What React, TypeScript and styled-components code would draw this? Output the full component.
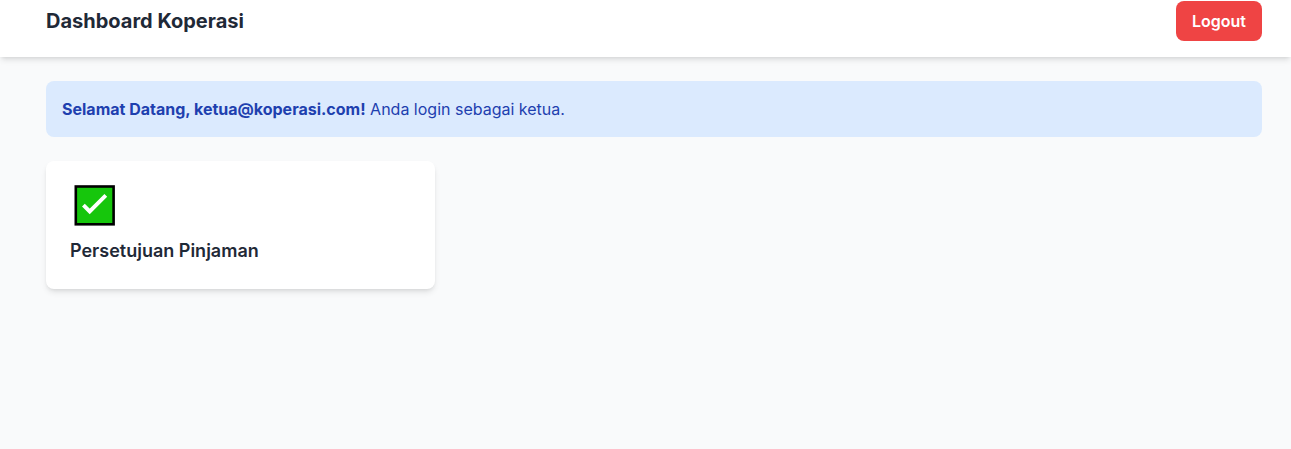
import React from "react";
import styled, { createGlobalStyle } from "styled-components";

const GlobalStyle = createGlobalStyle`
  *, *::before, *::after { box-sizing: border-box; }
  html, body { margin: 0; padding: 0; overflow: hidden; }
  body {
    background: #f9fafb;
    color: #1f2937;
    font-family: Inter, "Liberation Sans", sans-serif;
    font-size: 16px;
    line-height: 24px;
  }
`;

const Page = styled.div`
  min-height: 100vh;
  background: #f9fafb;
`;

const Header = styled.header`
  display: flex;
  align-items: center;
  justify-content: space-between;
  height: 57px;
  padding: 1px 29px 16px 46px;
  background: #ffffff;
  box-shadow: 0 4px 6px -1px rgba(0, 0, 0, 0.1), 0 2px 4px -2px rgba(0, 0, 0, 0.1);
`;

const Title = styled.h1`
  margin: 0;
  font-size: 20px;
  line-height: 28px;
  font-weight: 700;
`;

const LogoutButton = styled.button`
  height: 40px;
  padding: 8px 16px;
  border: 0;
  border-radius: 8px;
  background: #ef4444;
  color: #ffffff;
  font: inherit;
  font-weight: 600;
  cursor: pointer;
`;

const Main = styled.main`
  display: flex;
  flex-direction: column;
  gap: 24px;
  padding: 24px 29px 24px 46px;
`;

const Welcome = styled.div`
  padding: 16px;
  border-radius: 8px;
  background: #dbeafe;
  color: #1e40af;
`;

const Menu = styled.div`
  display: grid;
  grid-template-columns: repeat(3, 1fr);
  gap: 24px;
`;

const Card = styled.div`
  height: 128px;
  padding: 24px;
  border-radius: 8px;
  background: #ffffff;
  box-shadow: 0 4px 6px -1px rgba(0, 0, 0, 0.1), 0 2px 4px -2px rgba(0, 0, 0, 0.1);
`;

const CheckIcon = styled.svg`
  display: block;
  width: 41px;
  height: 41px;
  margin-left: 4px;
`;

const CardTitle = styled.h2`
  margin: 11px 0 0;
  font-size: 18px;
  line-height: 28px;
  font-weight: 600;
`;

export default function App() {
  return (
    <>
      <GlobalStyle />
      <Page>
        <Header>
          <Title>Dashboard Koperasi</Title>
          <LogoutButton>Logout</LogoutButton>
        </Header>
        <Main>
          <Welcome>
            <strong>Selamat Datang, ketua@koperasi.com!</strong> Anda login sebagai ketua.
          </Welcome>
          <Menu>
            <Card>
              <CheckIcon viewBox="0 0 41 41">
                <rect x="1.8" y="1.5" width="37.8" height="37.8" fill="#16c60c" stroke="#000" strokeWidth="2.6" />
                <path d="M9.4 20.2 L15.7 26.5 L31.8 10.4" fill="none" stroke="#fff" strokeWidth="3.9" />
              </CheckIcon>
              <CardTitle>Persetujuan Pinjaman</CardTitle>
            </Card>
          </Menu>
        </Main>
      </Page>
    </>
  );
}
